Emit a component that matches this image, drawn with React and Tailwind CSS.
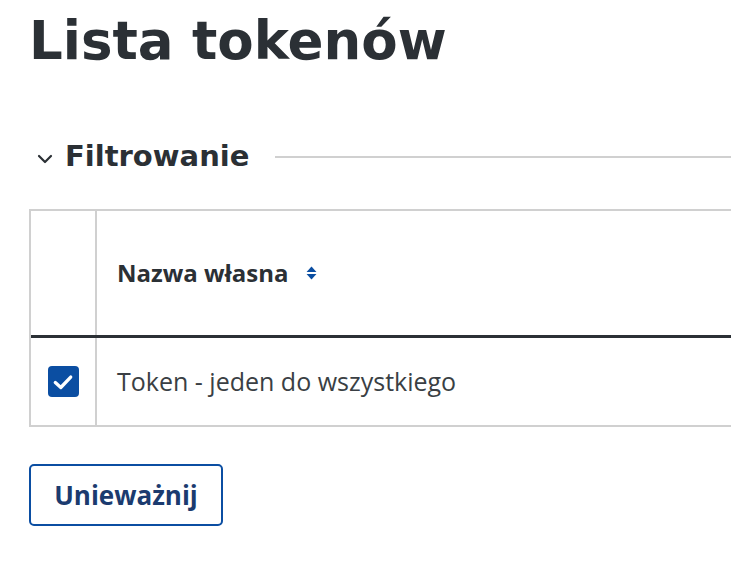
import React from "react";

export default function App() {
  return (
    <div className="w-[731px] h-[562px] overflow-hidden bg-white text-[#2b3035]" style={{ fontFamily: '"Open Sans", sans-serif' }}>
      <div className="pl-[29px]">
        <h1 className="pt-[9px] text-[53px] leading-[64px] font-bold" style={{ fontFamily: '"DejaVu Sans", sans-serif' }}>
          Lista tokenów
        </h1>
        <div className="mt-[64px] flex items-center h-[40px]">
          <svg width="16" height="16" viewBox="0 0 16 16" className="ml-[8px] mt-[4px]">
            <path d="M2 5 L8 11 L14 5" fill="none" stroke="#2b3035" strokeWidth="2.2" strokeLinecap="round" strokeLinejoin="round" />
          </svg>
          <span className="ml-[12px] text-[29px] font-bold" style={{ fontFamily: '"DejaVu Sans", sans-serif' }}>Filtrowanie</span>
          <div className="ml-[26px] flex-1 h-[2px] bg-[#d0d0d0]" />
        </div>
        <div className="mt-[32px] border-l-[2px] border-t-[2px] border-b-[2px] border-[#d0d0d0]">
          <div className="flex h-[127px] border-b-[3px] border-[#2b3035]">
            <div className="w-[66px] border-r-[2px] border-[#d0d0d0]" />
            <div className="flex items-center pl-[20px] gap-[17px]">
              <span className="text-[24px] font-bold">Nazwa własna</span>
              <svg width="11" height="16" viewBox="0 0 10 14">
                <path d="M5 1 L9.5 6 L0.5 6 Z" fill="#0b4ea2" />
                <path d="M5 13 L9.5 8 L0.5 8 Z" fill="#0b4ea2" />
              </svg>
            </div>
          </div>
          <div className="flex h-[87px]">
            <div className="w-[66px] border-r-[2px] border-[#d0d0d0] flex items-center justify-center">
              <div className="w-[31px] h-[31px] rounded-[4px] bg-[#0b4ea2] flex items-center justify-center">
                <svg width="22" height="18" viewBox="0 0 20 16">
                  <path d="M3 8.5 L8 13 L17 3.5" fill="none" stroke="white" strokeWidth="3" strokeLinecap="round" strokeLinejoin="round" />
                </svg>
              </div>
            </div>
            <div className="flex items-center pl-[20px]">
              <span className="text-[25px] text-[#3a3f44]">Token - jeden do wszystkiego</span>
            </div>
          </div>
        </div>
        <button className="mt-[37px] w-[194px] h-[62px] border-[2px] border-[#0b4ea2] rounded-[5px] text-[26px] font-bold text-[#1b3b6f] flex items-center justify-center">
          Unieważnij
        </button>
      </div>
    </div>
  );
}
